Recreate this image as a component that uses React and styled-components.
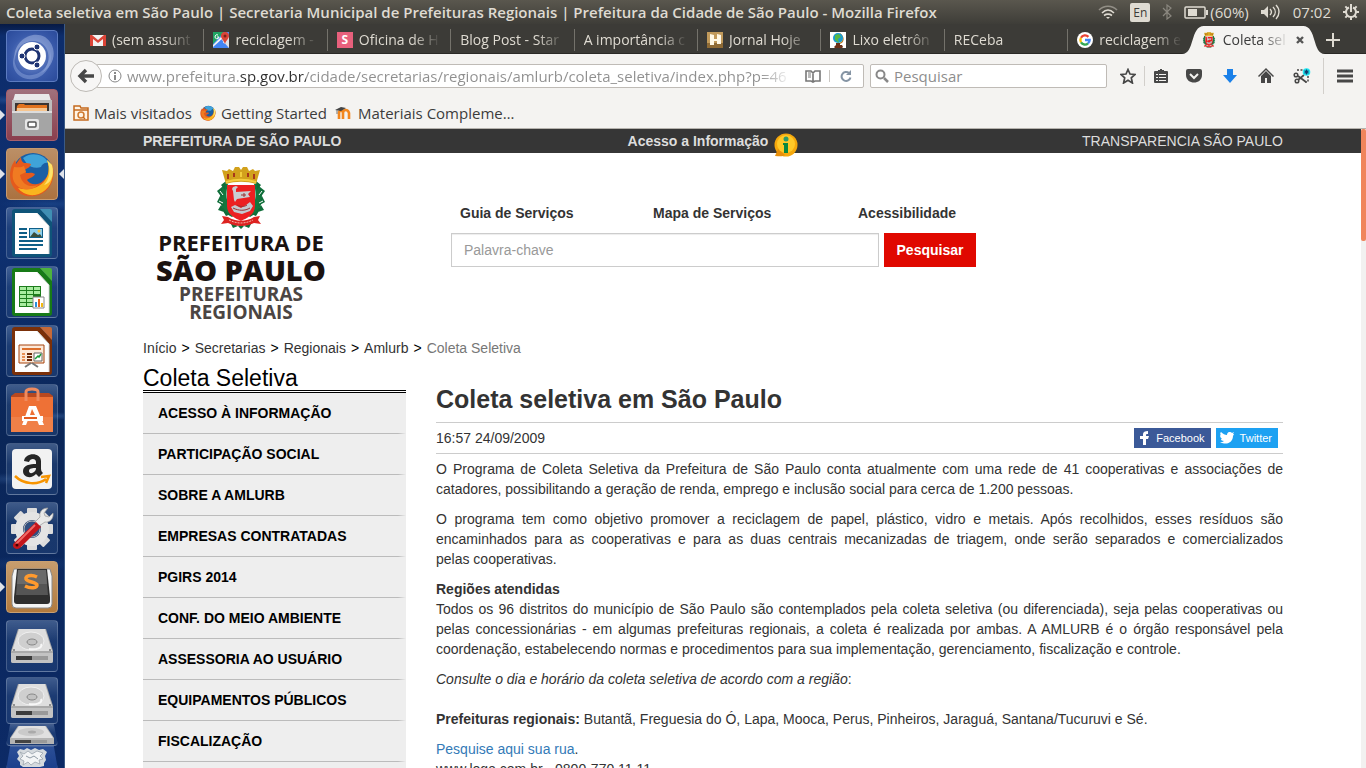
import React from 'react';
import styled, { createGlobalStyle } from 'styled-components';

const UI = '"Open Sans", "Noto Sans", sans-serif';
const WEB = '"Liberation Sans", Arial, sans-serif';

const GlobalStyle = createGlobalStyle`
  * { box-sizing: border-box; }
  body { margin: 0; background: #fff; }
  button, input { font: inherit; }
  button { border: 0; padding: 0; background: none; color: inherit; cursor: pointer; }
  ul { list-style: none; margin: 0; padding: 0; }
  svg { display: block; flex: none; }
`;

/* ---------- desktop ---------- */

const Desktop = styled.div`
  display: flex;
  flex-direction: column;
  height: 100vh;
  overflow: hidden;
  font-family: ${UI};
`;

const TitleBar = styled.header`
  flex: none;
  display: flex;
  align-items: center;
  justify-content: space-between;
  height: 24px;
  padding: 0 7px 0 6px;
  background: linear-gradient(#5a574e, #3e3d38);
  color: #dfdbd2;
  font-size: 15px;
  line-height: 24px;
`;

const WindowTitle = styled.strong`
  font-weight: 600;
  white-space: nowrap;
  overflow: hidden;
`;

const Tray = styled.div`
  flex: none;
  display: flex;
  align-items: center;
  gap: 12px;
`;

const TrayGroup = styled.span`
  display: flex;
  align-items: center;
  gap: 2px;
`;

const Keyboard = styled.span`
  width: 20px;
  height: 19px;
  border-radius: 2px;
  background: #dfdbd2;
  color: #3c3b37;
  font-size: 12px;
  line-height: 19px;
  text-align: center;
`;

const Workspace = styled.div`
  flex: 1;
  min-height: 0;
  display: flex;
`;

/* ---------- launcher ---------- */

const Launcher = styled.nav`
  flex: none;
  width: 65px;
  overflow: hidden;
  border-right: 1px solid #3b5a85;
  background:
    radial-gradient(ellipse 40px 5px at 10px 76px, #2a569a99, transparent),
    radial-gradient(ellipse 50px 6px at 50px 180px, #1f4c9199, transparent),
    radial-gradient(ellipse 34px 4px at 54px 392px, #38609c88, transparent),
    radial-gradient(ellipse 40px 6px at 10px 455px, #38609c66, transparent),
    radial-gradient(ellipse 60px 8px at 30px 540px, #1d468a66, transparent),
    linear-gradient(#071a44, #0d2d6c 12px, #0e3070 30%, #0a2658 55%, #0c2a66);
`;

const Dock = styled.ul`
  display: flex;
  flex-direction: column;
  gap: 7px;
  padding: 6px 6px 0;
`;

const Stack = styled.li`
  display: flex;
  flex-direction: column;
  margin-top: -2px;
`;

const DockItem = styled.li`
  position: relative;
`;

const Tile = styled.button`
  display: flex;
  align-items: center;
  justify-content: center;
  width: 52px;
  height: ${(p) => p.$h || 52}px;
  overflow: hidden;
  border: 1px solid ${(p) => p.$edge || '#ffffff30'};
  border-radius: 4px;
  background: ${(p) => p.$bg || 'linear-gradient(#8ea9cf66, #4a6ea044 40%, #34578c55)'};
  clip-path: ${(p) => (p.$fold ? 'polygon(8% 0, 92% 0, 100% 100%, 0 100%)' : 'none')};
`;

const Pip = styled.span`
  position: absolute;
  top: 21px;
  ${(p) => (p.$right ? 'right: -6px;' : 'left: -6px;')}
  border: 5px solid transparent;
  ${(p) => (p.$right ? 'border-right-color: #dfe3ea; border-left-width: 0;' : 'border-left-color: #dfe3ea; border-right-width: 0;')}
`;

/* ---------- browser chrome ---------- */

const Browser = styled.div`
  flex: 1;
  min-width: 0;
  display: flex;
  flex-direction: column;
  background: #f4f3f1;
  color: #3c3c3c;
  font-size: 15px;
`;

const TabStrip = styled.div`
  flex: none;
  display: flex;
  align-items: flex-end;
  height: 30px;
  padding-left: 16px;
  background: #3c3b37;
  box-shadow: inset 0 -1px #2a2926;
  font-size: 14px;
`;

const Tab = styled.button`
  position: relative;
  flex: 1;
  min-width: 0;
  display: flex;
  align-items: center;
  gap: 6px;
  height: 28px;
  padding: 0 10px 0 9px;
  color: ${(p) => (p.$active ? '#3c3c3c' : '#dfdbd2')};
  background: ${(p) => (p.$active ? 'linear-gradient(#f4f3f1, #f4f3f1) no-repeat 11px 0 / calc(100% - 22px) 100%' : p.$last ? 'none' : 'linear-gradient(#74726b, #74726b) no-repeat right 3px / 1px 22px')};
  text-align: left;
`;

const TabLabel = styled.span`
  position: relative;
  flex: 1;
  min-width: 0;
  overflow: hidden;
  white-space: nowrap;
  line-height: 20px;
  mask-image: linear-gradient(to right, #000 calc(100% - 28px), transparent);
`;

const TabIcon = styled.span`
  position: relative;
`;

const TabCurve = styled.svg`
  position: absolute;
  top: 0;
  ${(p) => (p.$right ? 'right: -10px; transform: scaleX(-1);' : 'left: -10px;')}
`;

const NewTab = styled.button`
  flex: none;
  display: flex;
  align-items: center;
  width: 51px;
  height: 28px;
  padding-left: 10px;
`;

const NavBar = styled.div`
  flex: none;
  display: flex;
  align-items: center;
  height: 43px;
  padding-left: 5px;
`;

const BackButton = styled.button`
  position: relative;
  z-index: 1;
  flex: none;
  display: flex;
  align-items: center;
  justify-content: center;
  width: 32px;
  height: 32px;
  border: 1px solid #bdbab5;
  border-radius: 16px;
  background: #f7f6f5;
`;

const Field = styled.label`
  display: flex;
  align-items: center;
  gap: 5px;
  height: 24px;
  border: 1px solid #bfbbb6;
  border-radius: 2px;
  background: #fff;
`;

const UrlField = styled(Field)`
  flex: 1;
  min-width: 0;
  margin-left: -6px;
  padding: 0 11px;
`;

const SearchField = styled(Field)`
  flex: none;
  width: 237px;
  margin-left: 6px;
  padding: 0 4px;
`;

const ChromeInput = styled.input`
  flex: 1;
  min-width: 0;
  height: 22px;
  padding: 0;
  border: 0;
  outline: 0;
  background: none;
  color: #3c3c3c;
  &::placeholder { color: #8d8d8d; opacity: 1; }
`;

const UrlInput = styled(ChromeInput)`
  background: linear-gradient(to right, #8f8f8f 112px, #2e2e2e 112px, #2e2e2e 179px, #8f8f8f 179px, #8f8f8f calc(100% - 40px), transparent calc(100% - 8px));
  -webkit-background-clip: text;
  background-clip: text;
  -webkit-text-fill-color: transparent;
`;

const FieldButton = styled.button`
  display: flex;
  padding-left: ${(p) => (p.$ruled ? 10 : 0)}px;
  margin-left: ${(p) => (p.$ruled ? 3 : 0)}px;
  border-left: ${(p) => (p.$ruled ? '1px solid #c9c6c2' : '0')};
`;

const ToolButton = styled.button`
  flex: none;
  display: flex;
  align-items: center;
  justify-content: center;
  width: ${(p) => p.$w || 36}px;
  height: ${(p) => p.$h || 20}px;
  margin-left: ${(p) => p.$gap || 0}px;
  border-left: ${(p) => (p.$ruled ? '1px solid #d2cfcb' : '0')};
  color: #474747;
`;

const BookmarksBar = styled.div`
  flex: none;
  display: flex;
  align-items: center;
  gap: 8px;
  height: 32px;
  padding: 0 8px;
  border-bottom: 1px solid #b5b2ad;
`;

const Bookmark = styled.a`
  display: flex;
  align-items: center;
  gap: 5px;
  color: #3c3c3c;
  text-decoration: none;
  line-height: 20px;
`;

/* ---------- web page ---------- */

const Viewport = styled.div`
  flex: 1;
  min-height: 0;
  display: flex;
`;

const Page = styled.div`
  flex: 1;
  min-width: 0;
  overflow: hidden;
  background: #fff;
  color: #333;
  font-family: ${WEB};
  font-size: 14px;
  line-height: 20px;
`;

const ScrollTrack = styled.div`
  flex: none;
  width: 5px;
  background: #f2f1f0;
`;

const ScrollThumb = styled.div`
  height: 112px;
  border-radius: 2px;
  background: #f0855c;
`;

const Container = styled.div`
  max-width: 1140px;
  margin: 0 auto;
`;

const TopBar = styled.div`
  height: 24px;
  background: #363636;
`;

const TopLinks = styled(Container)`
  display: grid;
  grid-template-columns: 1fr auto 1fr;
  line-height: 24px;
`;

const TopLink = styled.a`
  display: flex;
  gap: 6px;
  justify-self: ${(p) => p.$align || 'start'};
  height: 24px;
  color: #ddd;
  font-weight: ${(p) => (p.$bold ? 700 : 400)};
  text-decoration: none;
`;

const InfoBadge = styled.svg`
  position: relative;
  top: 4px;
`;

const PageHeader = styled(Container)`
  display: grid;
  grid-template-columns: 308px 525px;
  height: 185px;
`;

const Logo = styled.a`
  display: flex;
  flex-direction: column;
  align-items: center;
  width: 196px;
  padding-top: 14px;
  color: #1a1210;
  text-decoration: none;
  white-space: nowrap;
`;

const LogoLine = styled.span`
  color: ${(p) => (p.$soft ? '#4b4543' : '#1a1210')};
  font-family: "Open Sans", sans-serif;
  font-size: ${(p) => p.$size}px;
  font-weight: ${(p) => p.$weight};
  line-height: ${(p) => p.$line}px;
`;

const HeaderTools = styled.div`
  padding-top: 50px;
`;

const ServiceLinks = styled.nav`
  display: grid;
  grid-template-columns: 193px 205px auto;
  padding-left: 9px;
  margin-bottom: 10px;
`;

const ServiceLink = styled.a`
  color: #333;
  font-weight: 700;
  text-decoration: none;
`;

const SearchForm = styled.form`
  display: flex;
  gap: 5px;
`;

const KeywordInput = styled.input`
  flex: 1;
  min-width: 0;
  height: 34px;
  padding: 6px 12px;
  border: 1px solid #ccc;
  border-radius: 0;
  background: #fff;
  box-shadow: inset 0 1px 1px #00000013;
  color: #555;
  &::placeholder { color: #999; opacity: 1; }
`;

const SubmitButton = styled.button`
  width: 92px;
  height: 34px;
  background: #e00800;
  color: #fff;
  font-weight: 700;
`;

const Breadcrumb = styled(Container)`
  display: flex;
  gap: 5px;
  color: #000;
`;

const Crumb = styled.a`
  color: ${(p) => (p.$current ? '#777' : '#333')};
  text-decoration: none;
`;

const Columns = styled(Container)`
  display: grid;
  grid-template-columns: 263px minmax(0, 1fr);
  gap: 30px;
  padding-top: 8px;
`;

const SideTitle = styled.h2`
  margin: 0;
  border-bottom: 3px double #000;
  color: #000;
  font-size: 23px;
  font-weight: 400;
  line-height: 24px;
`;

const SideMenu = styled.ul`
  padding-bottom: 40px;
  background: #eee;
`;

const SideItem = styled.li`
  background: linear-gradient(to right, #bbb 97%, #eee) no-repeat 0 100% / 100% 1px;
`;

const SideLink = styled.a`
  display: block;
  padding: 10px 15px 11px;
  color: #000;
  font-weight: 700;
  text-decoration: none;
`;

const Article = styled.article`
  padding-top: 20px;
`;

const Heading = styled.h1`
  margin: 0;
  padding-bottom: 10px;
  border-bottom: 1px solid #ccc;
  font-size: 25px;
  font-weight: 700;
  line-height: 26px;
`;

const Meta = styled.div`
  display: flex;
  align-items: center;
  justify-content: space-between;
  height: 31px;
  margin-bottom: 5px;
  padding-right: 5px;
  border-bottom: 1px solid #ccc;
`;

const Shares = styled.div`
  display: flex;
  gap: 5px;
`;

const Share = styled.a`
  display: flex;
  align-items: center;
  gap: 6px;
  height: 20px;
  padding: 0 6px 0 4px;
  background: ${(p) => p.$bg};
  color: #fff;
  font-size: 11px;
  text-decoration: none;
`;

const Paragraph = styled.p`
  margin: 0 0 10px;
  text-align: justify;
`;

const TextLink = styled.a`
  color: #337ab7;
  text-decoration: none;
`;

/* ---------- small drawings ---------- */

const Svg = ({ w = 16, h, box, children }) => (
  <svg width={w} height={h || w} viewBox={box || `0 0 ${w} ${h || w}`} aria-hidden="true">{children}</svg>
);

const Crest = ({ w, h }) => (
  <Svg w={w} h={h} box="0 0 48 62">
    <path d="M7 16C0 28 2 44 15 50l4-3C9 40 8 28 11 17zM41 16c7 12 5 28-8 34l-4-3c10-7 11-19 8-30z" fill="#12783f" />
    <g fill="#0f6e3a">
      <path d="M9 14l-5 4 4 5zM5 20l-5 4 5 7zM3 29l-3 6 7 4zM4 38l-3 5 9 3zM6 44l3 5 5-2zM39 14l5 4-4 5zM43 20l5 4-5 7zM45 29l3 6-7 4zM44 38l3 5-9 3zM42 44l-3 5-5-2z" />
      <path d="M13 55l8 4 3-2 3 2 8-4-3 6-5-2-3 3-3-3-5 2z" />
    </g>
    <path d="M3 24l3 4M2 34l4 2M45 24l-3 4M46 34l-4 2" stroke="#fff" strokeWidth="1" />
    <path d="M10 18h28v21c0 9-8 12-14 15-6-3-14-6-14-15z" fill="#ec2021" />
    <path d="M9 17L5 3l5 1 2-2 4 2 2-4h4l2 3 2-3h4l2 4 4-2 2 2 5-1-4 14c-9-3-21-3-30 0z" fill="#d2a11c" />
    <path d="M11 7v5M17 6v4M31 6v4M37 7v5" stroke="#a8361a" strokeWidth="2" />
    <path d="M24 5v5M9 15c10-3 20-3 30 0" fill="none" stroke="#f3cd3e" strokeWidth="2" />
    <path d="M16 20l3-1 2 1-2 2v3l15-1-3 3 2 3-13 2-2 3-1-2-1-9-1-2z" fill="#c9ced2" />
    <path d="M14 40l4-2 6 3 5-3 4-3 3 4-3 5-8 3-8-2z" fill="#c3c9ce" />
    <path d="M24 28h5M27 26v4M16 41c6 3 12 3 17 0M20 38c4 2 7 2 10 0" stroke="#9b3030" strokeWidth="1" fill="none" />
    <path d="M5 49l6 1c8 5 18 5 26 0l6-1-2 4 3 4-7-1c-8 4-18 4-26 0l-7 1 3-4z" fill="#dd2220" />
    <path d="M12 53c8 4 16 4 24 0" stroke="#f2b5a7" strokeWidth="1" strokeDasharray="2 1" fill="none" />
  </Svg>
);

const Firefox = ({ size }) => (
  <Svg w={size} box="0 0 46 46">
    <circle cx="24" cy="22" r="20" fill="#1a5fa5" />
    <path d="M14 7c8-7 21-4 26 5-4-1-7 1-8 4-5 2-11 0-14-3z" fill="#48b4e6" opacity=".8" />
    <path d="M43 14c5 14-3 29-17 31C12 47 1 38 1 24c0-7 3-12 5-15l1 4 5-7c0 3 1 5 3 6 3 0 5 0 7 1-1 4-4 4-6 6l1 3c3 0 6-1 9 1-1 3-6 4-8 6 3 5 11 6 16 1 5-4 6-9 6-14z" fill="#e55a1c" />
    <path d="M43 14c4 14-4 28-17 30-8 1-14-3-17-7 13 4 25-2 29-11 2-5 2-11 0-17z" fill="#f9b51f" />
    <path d="M38 9c4 9 3 19-3 25 6-1 11-9 8-20z" fill="#fde36b" />
    <path d="M5 16c3 0 7 1 10-1l2 6-6 3c2 10 10 13 18 10-8 8-22 5-25-6-1-4 0-8 1-12z" fill="#f07b22" />
  </Svg>
);

const DocIcon = ({ dark, light, children }) => (
  <Svg w={42} h={50}>
    <path d="M1 4a3 3 0 013-3h25l12 13v32a3 3 0 01-3 3H4a3 3 0 01-3-3z" fill={dark} />
    <path d="M29 1h10a2 2 0 012 2v11z" fill={light} />
    <path d="M4 5h22l12 13v28H4z" fill="#fff" />
    <path d="M26 5l12 13v28" fill="none" stroke="#d7dadb" />
    {children}
  </Svg>
);

const Drive = () => (
  <Svg w={46} h={40}>
    <path d="M2 25L9 3h28l7 22v10a2 2 0 01-2 2H4a2 2 0 01-2-2z" fill="#a9a9a9" />
    <path d="M3 25L10 3h26l7 22z" fill="#dedede" />
    <path d="M2 27h42v8a2 2 0 01-2 2H4a2 2 0 01-2-2z" fill="#c3c3c3" />
    <path d="M7 30h32v4H7z" fill="#3b3b3b" />
    <path d="M23 30h16v4H23z" fill="#999" />
    <ellipse cx="22" cy="15" rx="13" ry="9" fill="#cfcfcf" stroke="#efefef" />
    <ellipse cx="23" cy="16" rx="5" ry="3" fill="#c1c1c1" stroke="#888" />
    <path d="M32 18c2 4-5 6-12 5" stroke="#f7f7f7" fill="none" strokeWidth="2" />
    <circle cx="5" cy="24" r="1" fill="#777" /><circle cx="41" cy="24" r="1" fill="#777" />
  </Svg>
);

const gearTeeth = [0, 45, 90, 135, 180, 225, 270, 315];

const apps = [
  {
    name: 'Dash', bg: 'radial-gradient(circle at 50% 50%, #6b86c8 20%, #3a5bab 60%, #2a4a9a)', edge: '#5c7bc0',
    icon: (
      <Svg w={50}>
        <path d="M8 30C8 14 22 6 34 12c10 6 10 22 0 30 14-6 18-26 4-36C22-2 4 14 8 30z" fill="#a9bbe6" opacity=".5" />
        <path d="M42 18c4 14-8 28-22 26C10 42 4 30 10 20 0 34 10 50 26 48c14-2 22-18 16-30z" fill="#8ea6dc" opacity=".5" />
        <circle cx="25" cy="25" r="14" fill="#fff" />
        <circle cx="25" cy="25" r="7" fill="none" stroke="#1e3372" strokeWidth="3" />
        <g fill="#1e3372" stroke="#fff"><circle cx="15" cy="25" r="3" /><circle cx="30" cy="16" r="3" /><circle cx="30" cy="34" r="3" /></g>
      </Svg>
    ),
  },
  {
    name: 'Arquivos', bg: 'linear-gradient(#a0717c, #8a3f4e)', edge: '#a8606c', left: true,
    icon: (
      <Svg w={44} h={46}>
        <path d="M5 2h34l3 10H2z" fill="#e9e9e9" />
        <path d="M2 8h40v36H2z" fill="#bcbcbc" />
        <path d="M5 11h34v9H5z" fill="#3a3533" />
        <path d="M7 14l2-2h5l1 1h22v8H6z" fill="#e1731f" /><path d="M7 16h30v4H7z" fill="#f6c58f" />
        <path d="M2 19h40v25H2z" fill="#a5a5a5" /><path d="M2 19h40v2H2z" fill="#dcdcdc" />
        <rect x="15" y="27" width="14" height="11" rx="2" fill="#e6e6e6" /><rect x="18" y="30" width="8" height="5" rx="1" fill="#fff" stroke="#555" strokeWidth="1.5" />
      </Svg>
    ),
  },
  { name: 'Firefox', bg: 'linear-gradient(#bb8f66, #ab7240)', edge: '#c69a70', left: true, right: true, icon: <Firefox size={46} /> },
  {
    name: 'Writer', icon: (
      <DocIcon dark="#0f5479" light="#3f8fb3">
        <g fill="#0f5f88"><path d="M8 20h8v2H8zM8 24h8v2H8zM8 28h8v2H8zM8 32h24v2H8zM8 36h24v2H8zM8 40h18v2H8z" /><path d="M18 20h14v10H18z" /></g>
        <path d="M19 21h12v8H19z" fill="#8ed0ee" /><path d="M19 29l4-5 4 3 2-1 2 3z" fill="#3c4f3a" /><circle cx="28" cy="23" r="1.5" fill="#f5c542" />
      </DocIcon>
    ),
  },
  {
    name: 'Calc', icon: (
      <DocIcon dark="#177a17" light="#4db33d">
        <path d="M8 19h22v21H8z" fill="#1d7c1c" />
        <path d="M9 20h6v3H9zM16 20h6v3h-6zM23 20h6v3h-6zM9 24h6v3H9zM16 24h6v3h-6zM23 24h6v3h-6zM9 28h6v3H9zM16 28h6v3h-6zM9 32h6v3H9zM16 32h6v3h-6zM9 36h6v3H9zM16 36h6v3h-6z" fill="#a9eca0" />
        <path d="M22 30h11v11H22z" fill="#fff" stroke="#888" /><path d="M24 35h2v5h-2z" fill="#2a8edb" /><path d="M27 32h2v8h-2z" fill="#e8641b" /><path d="M30 36h2v4h-2z" fill="#f2b90f" />
      </DocIcon>
    ),
  },
  {
    name: 'Impress', icon: (
      <DocIcon dark="#7b3009" light="#c76a38">
        <path d="M8 19h25v18H8z" fill="#fce9d9" stroke="#a6430d" />
        <path d="M11 22h19v2H11z" fill="#dd6f2c" /><path d="M16 27h5v2h-5zM16 30h5v2h-5zM16 33h5v2h-5z" fill="#6b2706" /><path d="M11 27h3v2h-3zM11 30h3v2h-3zM11 33h3v2h-3z" fill="#e88f54" />
        <path d="M23 27h8v8h-8z" fill="#fff" stroke="#666" /><path d="M24 33l3-3 1 1 2-3" stroke="#1a9b3a" fill="none" strokeWidth="1.5" />
        <path d="M20 37l-6 4M21 37l6 4" stroke="#777" strokeWidth="2" />
      </DocIcon>
    ),
  },
  {
    name: 'Ubuntu Software', icon: (
      <Svg w={44} h={46}>
        <path d="M1 9l4-3h34l4 3v4H1z" fill="#b8481f" /><path d="M1 10h42v35H1z" fill="#ee7136" /><path d="M1 30h42v15H1z" fill="#f08048" />
        <path d="M16 14V5c0-4 12-4 12 0v9" fill="none" stroke="#ef8b5f" strokeWidth="3" />
        <path d="M19 19h7l8 19h-5l-2-5h-9l-2 5h-4zM20 28h5l-3-6z" fill="#fff" fillRule="evenodd" />
        <path d="M12 29h21v5H12z" fill="#fff" /><path d="M14 30h13v2H14z" fill="#e25d22" />
      </Svg>
    ),
  },
  {
    name: 'Amazon', icon: (
      <Svg w={42}>
        <rect x="1" y="1" width="40" height="40" rx="4" fill="#f2f2f2" />
        <path d="M25 20c0 5-7 7-7 3 0-3 4-3 7-3zm-12-7l5 1c1-4 7-4 7 0v2c-6 0-13 1-13 7 0 7 9 8 13 3l3 3 4-4c-2-2-2-3-2-6v-6c0-9-16-9-17 0z" fill="#262626" />
        <path d="M4 28c9 9 23 9 31 3M30 29l8-1-3 7" fill="none" stroke="#f79400" strokeWidth="2.5" />
      </Svg>
    ),
  },
  {
    name: 'Configurações', icon: (
      <Svg w={48}>
        {gearTeeth.map((a) => <rect key={a} x="19" y="4" width="10" height="10" rx="1" fill="#dcdcdc" transform={`rotate(${a} 24 25)`} />)}
        <circle cx="24" cy="25" r="13" fill="none" stroke="#e4e4e4" strokeWidth="8" />
        <circle cx="24" cy="25" r="8" fill="#314f80" stroke="#b5b5b5" />
        <path d="M31 22l-4-4 5-5c-1-5 2-9 8-9l-4 5 1 3 4 1 4-4c1 6-4 10-8 9z" fill="#e9e9e9" stroke="#999" strokeWidth=".7" />
        <path d="M28 18l5 5L12 44c-5 3-9-2-6-5z" fill="#c4161c" /><path d="M27 21L8 40" stroke="#f06a66" strokeWidth="2" /><circle cx="9" cy="41" r="1.5" fill="#400" />
      </Svg>
    ),
  },
  {
    name: 'Sublime Text', bg: 'linear-gradient(#c79d6e, #b27a3d)', edge: '#c9a071', left: true,
    icon: (
      <Svg w={46}>
        <path d="M3 12l2-7h36l2 7v28a4 4 0 01-4 4H7a4 4 0 01-4-4z" fill="#f4f4f4" stroke="#8a8a8a" />
        <path d="M5 33L8 5h30l3 28v4a3 3 0 01-3 3H8a3 3 0 01-3-3z" fill="#2e2e2e" />
        <path d="M7 31L9 6h28l2 25z" fill="#555" /><path d="M8 20L9 6h28l1 14z" fill="#6a6a6a" />
        <path d="M28 13c-6-3-12-1-11 2s11 3 11 6-6 4-12 1" fill="none" stroke="#ff9a2e" strokeWidth="3.500" />
      </Svg>
    ),
  },
  { name: 'Disco 1', icon: <Drive /> },
];

const GmailIcon = () => (
  <Svg>
    <path d="M1 3h14v11H1z" fill="#f2f2f2" /><path d="M0 3h2l6 5 6-5h2v11h-3V7L8 11 3 7v7H0z" fill="#db4437" />
  </Svg>
);
const MapsIcon = () => (
  <Svg>
    <path d="M0 0h16v16H0z" fill="#4a8af4" /><path d="M0 0h11L0 12z" fill="#1fa463" /><path d="M0 13L12 1l4 4v2L7 16H4l7-7-2-2-9 8z" fill="#f5f5f5" /><path d="M9 8l7 8V6z" fill="#dfe1e5" /><path d="M1 16l7-8 7 8z" fill="#4285f4" />
    <path d="M12 0a4 4 0 014 4c0 3-3 4-4 8-1-4-4-5-4-8a4 4 0 014-4z" fill="#db4437" /><circle cx="12" cy="4" r="1.5" fill="#7b231a" /><path d="M5 3a2 2 0 101 2H4" stroke="#fff" fill="none" />
  </Svg>
);
const LetterBox = styled.span`
  display: block;
  width: 16px;
  height: 16px;
  background: #e8607c;
  color: #fff;
  font-size: 12px;
  font-weight: 700;
  line-height: 16px;
  text-align: center;
`;
const JornalIcon = () => (
  <Svg><path d="M0 0h16v16H0z" fill="#c19a5b" /><path d="M0 11h16v5H0z" fill="#8f6b35" /><path d="M3 2l4 1v4h3V2l4 1v9h-4V9H7v4H3z" fill="#fff8e6" /></Svg>
);
const GlobeIcon = () => (
  <Svg><path d="M0 0h16v16H0z" fill="#fff" /><path d="M10 1c7 5 3 13-4 11l1-1c5 1 8-5 3-9z" fill="#b8771b" /><circle cx="8" cy="6" r="5" fill="#1b9bd0" /><path d="M5 3l4-1 2 3-3 2 1 4-4-3z" fill="#58b947" /><path d="M6 11h4v2h2l1 2-1 1H5l-1-1 2-2z" fill="#6a2f16" /></Svg>
);
const GoogleIcon = () => (
  <Svg>
    <circle cx="8" cy="8" r="8" fill="#fff" />
    <g fill="none" strokeWidth="2.4"><path d="M11.4 4.8A4.6 4.6 0 004 5.8" stroke="#ea4335" /><path d="M4 5.8a4.6 4.6 0 000 4.6" stroke="#fbbc05" /><path d="M4 10.4a4.6 4.6 0 007 1" stroke="#34a853" /><path d="M11 11.4A4.6 4.6 0 0012.6 8H8" stroke="#4285f4" /></g>
  </Svg>
);

const tabs = [
  { label: '(sem assunt', icon: <GmailIcon /> },
  { label: 'reciclagem -', icon: <MapsIcon /> },
  { label: 'Oficina de H', icon: <LetterBox>S</LetterBox> },
  { label: 'Blog Post - Star' },
  { label: 'A importância c' },
  { label: 'Jornal Hoje', icon: <JornalIcon /> },
  { label: 'Lixo eletrôn', icon: <GlobeIcon /> },
  { label: 'RECeba' },
  { label: 'reciclagem e', icon: <GoogleIcon /> },
];

const curve = <path d="M0 28C13 28 8 0 22 0v28z" fill="#f4f3f1" />;

const menu = [
  'ACESSO À INFORMAÇÃO', 'PARTICIPAÇÃO SOCIAL', 'SOBRE A AMLURB', 'EMPRESAS CONTRATADAS', 'PGIRS 2014',
  'CONF. DO MEIO AMBIENTE', 'ASSESSORIA AO USUÁRIO', 'EQUIPAMENTOS PÚBLICOS', 'FISCALIZAÇÃO',
];

const crumbs = ['Início', 'Secretarias', 'Regionais', 'Amlurb'];

function SystemBar() {
  return (
    <TitleBar>
      <WindowTitle>Coleta seletiva em São Paulo | Secretaria Municipal de Prefeituras Regionais | Prefeitura da Cidade de São Paulo - Mozilla Firefox</WindowTitle>
      <Tray>
        <Svg w={20} h={16}>
          <g fill="none" stroke="#dfdbd2" strokeWidth="1.6"><path d="M1 6c5-5 13-5 18 0" opacity=".45" /><path d="M4 9c4-4 8-4 12 0" /><path d="M6 11.500c3-2 5-2 8 0" /></g><path d="M8 13h4l-2 2z" fill="#dfdbd2" />
        </Svg>
        <Keyboard>En</Keyboard>
        <Svg w={10} h={16}><path d="M1 4l8 8-4 3V1l4 3-8 8" fill="none" stroke="#8a877f" strokeWidth="1.2" /></Svg>
        <TrayGroup>
          <Svg w={24} h={14}><rect x="1" y="2" width="20" height="11" rx="1" fill="none" stroke="#dfdbd2" strokeWidth="1.5" /><path d="M22 5h2v5h-2z" fill="#dfdbd2" /><path d="M4 4h9v7H4z" fill="#dfdbd2" /></Svg>
          <span>(60%)</span>
        </TrayGroup>
        <Svg w={20} h={16}><path d="M0 6h3l4-4v12l-4-4H0z" fill="#dfdbd2" /><g fill="none" stroke="#dfdbd2" strokeWidth="1.4"><path d="M9 5c2 2 2 4 0 6M12 3c3 3 3 7 0 10M15 1c4 4 4 10 0 14" /></g></Svg>
        <time>07:02</time>
        <Svg w={16}>
          {gearTeeth.map((a) => <rect key={a} x="7" y="0" width="2" height="3" fill="#dfdbd2" transform={`rotate(${a} 8 8)`} />)}
          <path d="M6 3.500a5 5 0 104 0" fill="none" stroke="#dfdbd2" strokeWidth="2" /><path d="M7 2h2v6H7z" fill="#dfdbd2" />
        </Svg>
      </Tray>
    </TitleBar>
  );
}

function Dockbar() {
  return (
    <Launcher aria-label="Lançador">
      <Dock>
        {apps.map((a) => (
          <DockItem key={a.name}>
            {a.left && <Pip />}
            <Tile $bg={a.bg} $edge={a.edge} aria-label={a.name}>{a.icon}</Tile>
            {a.right && <Pip $right />}
          </DockItem>
        ))}
        <Stack>
          <Tile $h={47} aria-label="Disco 2"><Drive /></Tile>
          <Tile $h={22} $fold aria-label="Disco 3">
            <Svg w={46} h={20}><path d="M1 13L9 1h28l8 12v6H1z" fill="#b4b4b4" /><path d="M2 13L10 1h26l8 12z" fill="#e0e0e0" /><ellipse cx="22" cy="7" rx="13" ry="4" fill="#cacaca" /><ellipse cx="23" cy="7" rx="4" ry="1.500" fill="#aaa" /><path d="M6 15h32v3H6z" fill="#444" /><path d="M22 15h16v3H22z" fill="#999" /></Svg>
          </Tile>
          <Tile $h={24} $fold $bg="linear-gradient(#2b4f97, #1b3f8c)" aria-label="Lixeira">
            <Svg w={34} h={22}><path d="M2 5l3-3 4 1 3-2 4 2 4-2 4 2 4-1 4 3-2 4 1 4-2 3v3l-4 1H8l-3-2v-3l-3-3 2-3z" fill="#d5dade" /><path d="M5 5l4 2 4-3 4 3 5-3 6 2-3 3 3 3-4 1 1 4-5-2-4 3-3-3-5 3 1-4-4-2 3-3z" fill="#f3f5f6" stroke="#9aa4ad" strokeWidth=".8" /><path d="M11 9l4 2 4-2 4 3" stroke="#8f9ba5" fill="none" /></Svg>
          </Tile>
        </Stack>
      </Dock>
    </Launcher>
  );
}

function Chrome() {
  return (
    <>
      <TabStrip role="tablist">
        {tabs.map((t, i) => (
          <Tab key={t.label} role="tab" $last={i === tabs.length - 1}>
            {t.icon && <TabIcon>{t.icon}</TabIcon>}
            <TabLabel>{t.label}</TabLabel>
          </Tab>
        ))}
        <Tab role="tab" aria-selected="true" $active>
          <TabCurve width="22" height="28" viewBox="0 0 22 28">{curve}</TabCurve>
          <TabCurve $right width="22" height="28" viewBox="0 0 22 28">{curve}</TabCurve>
          <TabIcon><Crest w={16} h={16} /></TabIcon>
          <TabLabel>Coleta sel</TabLabel>
          <TabIcon><Svg w={10}><path d="M2 2l6 6M8 2L2 8" stroke="#555" strokeWidth="2.4" /></Svg></TabIcon>
        </Tab>
        <NewTab aria-label="Nova aba"><Svg w={16}><path d="M8 1v14M1 8h14" stroke="#dfdbd2" strokeWidth="2" /></Svg></NewTab>
      </TabStrip>
      <NavBar>
        <BackButton aria-label="Voltar"><Svg w={18}><path d="M9 3L3 9l6 6M3 9h14" fill="none" stroke="#474747" strokeWidth="3.400" /></Svg></BackButton>
        <UrlField>
          <Svg w={14}><circle cx="7" cy="7" r="6" fill="none" stroke="#888" /><path d="M6 6h2v5H6zM6 3h2v2H6z" fill="#888" /></Svg>
          <UrlInput aria-label="Endereço" defaultValue="www.prefeitura.sp.gov.br/cidade/secretarias/regionais/amlurb/coleta_seletiva/index.php?p=46" />
          <FieldButton aria-label="Modo de leitura"><Svg w={16}><path d="M8 4v10M1 3h5l2 2 2-2h5v10h-5l-2 1-2-1H1z" fill="none" stroke="#777" strokeWidth="1.600" /><path d="M3 5h3M3 7h3M3 9h3" stroke="#777" /></Svg></FieldButton>
          <FieldButton $ruled aria-label="Recarregar"><Svg w={12}><path d="M9 3a4.500 4.500 0 101.500 4.500" fill="none" stroke="#8594a4" strokeWidth="2" /><path d="M11 0v5H6z" fill="#8594a4" /></Svg></FieldButton>
        </UrlField>
        <SearchField>
          <Svg w={14}><circle cx="5.500" cy="5.500" r="4" fill="none" stroke="#888" strokeWidth="2" /><path d="M9 9l4 4" stroke="#888" strokeWidth="2.500" /></Svg>
          <ChromeInput aria-label="Pesquisar na web" placeholder="Pesquisar" />
        </SearchField>
        <ToolButton $w={32} $gap={5} aria-label="Favoritar"><Svg w={16}><path d="M8 1.500l2 4.500 5 .5-3.700 3.300L12.400 15 8 12.300 3.600 15l1.100-5.200L1 6.500 6 6z" fill="none" stroke="#474747" strokeWidth="1.700" /></Svg></ToolButton>
        <ToolButton $w={32} $ruled aria-label="Lista de favoritos"><Svg w={14} h={16}><path d="M1 3h3V2h2V1h2v1h2v1h3a1 1 0 011 1v10a1 1 0 01-1 1H1a1 1 0 01-1-1V4a1 1 0 011-1zM2 6v1h2V6zM5 6v1h7V6zM2 9v1h2V9zM5 9v1h7V9zM2 12v1h2v-1zM5 12v1h7v-1z" fill="#474747" fillRule="evenodd" /></Svg></ToolButton>
        <ToolButton aria-label="Pocket"><Svg w={16}><path d="M2 1h12a2 2 0 012 2v4c0 10-16 10-16 0V3a2 2 0 012-2z" fill="#474747" /><path d="M4 6l4 4 4-4" fill="none" stroke="#f4f3f1" strokeWidth="2" /></Svg></ToolButton>
        <ToolButton aria-label="Downloads"><Svg w={16}><path d="M5 1h6v6h4l-7 8-7-8h4z" fill="#1a80e8" /></Svg></ToolButton>
        <ToolButton aria-label="Página inicial"><Svg w={16}><path d="M8 0l8 8-1 1-7-7-7 7-1-1zM3 8l5-5 5 5v7H9v-5H7v5H3z" fill="#474747" /></Svg></ToolButton>
        <ToolButton aria-label="Capturar"><Svg w={18} h={16}><path d="M4 2h7M15 8v6h-4" fill="none" stroke="#474747" strokeWidth="1.500" strokeDasharray="2 1.500" /><circle cx="3" cy="7" r="1.800" fill="none" stroke="#474747" strokeWidth="1.500" /><circle cx="4" cy="13" r="1.800" fill="none" stroke="#474747" strokeWidth="1.500" /><path d="M5 12l6-5M5 8l8 6" stroke="#474747" strokeWidth="1.700" /><circle cx="13.500" cy="4" r="3.800" fill="#1ee6f2" /><path d="M13.500 1.500v5M11.500 2.700l4 2.600M15.500 2.700l-4 2.600" stroke="#123a6b" strokeWidth="1.200" /></Svg></ToolButton>
        <ToolButton $w={43} $h={36} $gap={3} $ruled aria-label="Menu"><Svg w={16} h={14}><path d="M0 2h16M0 7h16M0 12h16" stroke="#474747" strokeWidth="3" /></Svg></ToolButton>
      </NavBar>
      <BookmarksBar>
        <Bookmark href="#visitados"><Svg><path d="M1 1h6l1 2h7v12H1z" fill="#fff4e6" stroke="#c46a1e" strokeWidth="1.500" /><path d="M1 5h14" stroke="#c46a1e" strokeWidth="1.500" /><circle cx="8" cy="10" r="3" fill="none" stroke="#d07a30" strokeWidth="1.500" /><path d="M10 12l2 2" stroke="#c46a1e" strokeWidth="1.500" /></Svg>Mais visitados</Bookmark>
        <Bookmark href="#inicio"><Firefox size={16} />Getting Started</Bookmark>
        <Bookmark href="#materiais"><Svg w={18} h={16}><path d="M4 14V8c0-3 4-3 4 0v6M8 8c0-4 5-4 6 0v6" fill="none" stroke="#f2871f" strokeWidth="2.600" /><path d="M0 5l6-3 5 1-5 3z" fill="#444" /><path d="M2 5v4" stroke="#777" /></Svg>Materiais Compleme…</Bookmark>
      </BookmarksBar>
    </>
  );
}

function Site() {
  return (
    <Page>
      <TopBar>
        <TopLinks as="nav">
          <TopLink href="#prefeitura" $bold>PREFEITURA DE SÃO PAULO</TopLink>
          <TopLink href="#acesso" $bold>
            Acesso a Informação
            <InfoBadge width="24" height="24" viewBox="0 0 24 24" aria-hidden="true">
              <circle cx="12" cy="12" r="11.500" fill="#f5a80c" /><path d="M1 23l3-7 7 6c-3 2-6 1-10 1z" fill="#e88f0a" /><circle cx="12" cy="11" r="9" fill="#ffc928" /><circle cx="12" cy="6" r="2.500" fill="#2d9b6a" /><path d="M9 10h5v10h-4v-8H9z" fill="#08873e" />
            </InfoBadge>
          </TopLink>
          <TopLink href="#transparencia" $align="end">TRANSPARENCIA SÃO PAULO</TopLink>
        </TopLinks>
      </TopBar>
      <PageHeader as="header">
        <Logo href="#home">
          <Crest w={48} h={62} />
          <LogoLine $size={22} $weight={700} $line={26}>PREFEITURA DE</LogoLine>
          <LogoLine $size={29} $weight={800} $line={30}>SÃO PAULO</LogoLine>
          <LogoLine $size={19} $weight={700} $line={18} $soft>PREFEITURAS</LogoLine>
          <LogoLine $size={19} $weight={700} $line={18} $soft>REGIONAIS</LogoLine>
        </Logo>
        <HeaderTools>
          <ServiceLinks>
            <ServiceLink href="#guia">Guia de Serviços</ServiceLink>
            <ServiceLink href="#mapa">Mapa de Serviços</ServiceLink>
            <ServiceLink href="#acessibilidade">Acessibilidade</ServiceLink>
          </ServiceLinks>
          <SearchForm onSubmit={(e) => e.preventDefault()}>
            <KeywordInput aria-label="Palavra-chave" placeholder="Palavra-chave" />
            <SubmitButton>Pesquisar</SubmitButton>
          </SearchForm>
        </HeaderTools>
      </PageHeader>
      <Breadcrumb as="nav">
        {crumbs.map((c) => (
          <React.Fragment key={c}><Crumb href={`#${c}`}>{c}</Crumb><span>&gt;</span></React.Fragment>
        ))}
        <Crumb as="span" $current>Coleta Seletiva</Crumb>
      </Breadcrumb>
      <Columns as="main">
        <aside>
          <SideTitle>Coleta Seletiva</SideTitle>
          <SideMenu>
            {menu.map((m) => <SideItem key={m}><SideLink href="#menu">{m}</SideLink></SideItem>)}
          </SideMenu>
        </aside>
        <Article>
          <Heading>Coleta seletiva em São Paulo</Heading>
          <Meta>
            <time>16:57 24/09/2009</time>
            <Shares>
              <Share href="#facebook" $bg="#3b5998"><Svg w={12} h={14}><path d="M5 14V8H2V5h3V3c0-2 2-3 5-3v3C8 3 8 3 8 5h3l-1 3H8v6z" fill="#fff" /></Svg>Facebook</Share>
              <Share href="#twitter" $bg="#1da1f2"><Svg w={14} h={12}><path d="M0 10c2 0 3 0 4-1-2 0-3-1-3-2h1C1 6 0 5 0 3l1 .5C0 2 0 1 1 0c2 2 4 3 6 3 0-3 3-4 5-2l2-1-1 2 1 0-1 2C13 10 7 14 0 10z" fill="#fff" /></Svg>Twitter</Share>
            </Shares>
          </Meta>
          <Paragraph>O Programa de Coleta Seletiva da Prefeitura de São Paulo conta atualmente com uma rede de 41 cooperativas e associações de catadores, possibilitando a geração de renda, emprego e inclusão social para cerca de 1.200 pessoas.</Paragraph>
          <Paragraph>O programa tem como objetivo promover a reciclagem de papel, plástico, vidro e metais. Após recolhidos, esses resíduos são encaminhados para as cooperativas e para as duas centrais mecanizadas de triagem, onde serão separados e comercializados pelas&nbsp;cooperativas.</Paragraph>
          <Paragraph><strong>Regiões atendidas</strong><br />Todos os 96 distritos do município de São Paulo são contemplados pela coleta seletiva (ou diferenciada), seja pelas cooperativas ou pelas concessionárias - em algumas prefeituras regionais, a coleta é realizada por ambas. A AMLURB é o órgão responsável pela coordenação, estabelecendo normas e procedimentos para sua implementação, gerenciamento, fiscalização e controle.</Paragraph>
          <Paragraph><em>Consulte o dia e horário da coleta seletiva de acordo com a região</em>:<br /><br /><strong>Prefeituras regionais:</strong> Butantã, Freguesia do Ó, Lapa, Mooca, Perus, Pinheiros, Jaraguá, Santana/Tucuruvi e Sé.</Paragraph>
          <Paragraph><TextLink href="#rua">Pesquise aqui sua rua</TextLink>.<br />www.loga.com.br - 0800-770 11 11</Paragraph>
        </Article>
      </Columns>
    </Page>
  );
}

export default function App() {
  return (
    <Desktop>
      <GlobalStyle />
      <SystemBar />
      <Workspace>
        <Dockbar />
        <Browser>
          <Chrome />
          <Viewport>
            <Site />
            <ScrollTrack><ScrollThumb /></ScrollTrack>
          </Viewport>
        </Browser>
      </Workspace>
    </Desktop>
  );
}
